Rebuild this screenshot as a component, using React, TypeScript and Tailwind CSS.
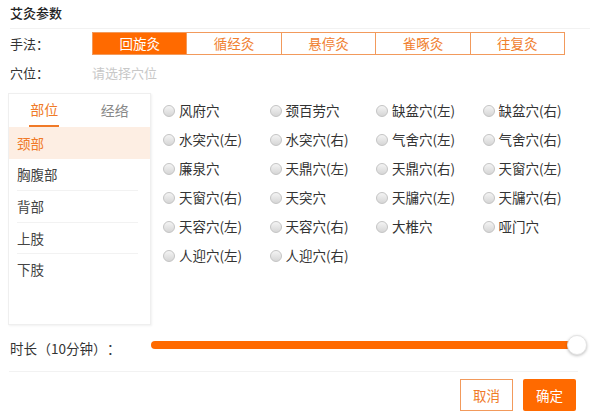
import React from "react";

const methods = ["回旋灸", "循经灸", "悬停灸", "雀啄灸", "往复灸"];
const parts = ["颈部", "胸腹部", "背部", "上肢", "下肢"];
const points = [
  "风府穴", "颈百劳穴", "缺盆穴(左)", "缺盆穴(右)",
  "水突穴(左)", "水突穴(右)", "气舍穴(左)", "气舍穴(右)",
  "廉泉穴", "天鼎穴(左)", "天鼎穴(右)", "天窗穴(左)",
  "天窗穴(右)", "天突穴", "天牖穴(左)", "天牖穴(右)",
  "天容穴(左)", "天容穴(右)", "大椎穴", "哑门穴",
  "人迎穴(左)", "人迎穴(右)",
];

export default function App() {
  return (
    <div
      className="w-[600px] h-[418px] bg-white text-[#333] overflow-hidden"
      style={{ fontFamily: '"Noto Sans CJK SC", "Noto Sans", sans-serif' }}
    >
      {/* title */}
      <div className="mx-[10px] h-[29px] flex items-center pb-[3px] border-b border-[#f2f2f2] text-[13px] font-medium text-[#222]">
        艾灸参数
      </div>

      {/* method */}
      <div className="flex items-center h-[23px] mt-[3px]">
        <div className="w-[92px] pl-[10px] text-[13px] text-[#333]">手法：</div>
        <div className="flex w-[473px] h-[23px] border border-[#f29a5c]">
          {methods.map((m, i) => (
            <div
              key={m}
              className={
                "flex-1 flex items-center justify-center text-[13.5px] " +
                (i === 0
                  ? "bg-[#ff6a00] text-white"
                  : "text-[#f0802f] border-l border-[#f29a5c]")
              }
            >
              {m}
            </div>
          ))}
        </div>
      </div>

      {/* point */}
      <div className="flex items-center h-[24px] mt-[6px]">
        <div className="w-[92px] pl-[10px] text-[13px] text-[#333]">穴位：</div>
        <div className="text-[13px] text-[#c8c8c8]">请选择穴位</div>
      </div>

      {/* body */}
      <div className="flex mt-[8px] h-[232px]">
        <div className="ml-[8px] w-[143px] h-full border border-[#efefef] shadow-[1px_1px_2px_rgba(0,0,0,0.06)] flex flex-col">
          <div className="flex h-[33px]">
            <div className="flex-1 flex justify-center">
              <div className="h-full flex items-center text-[14px] text-[#f07a28] border-b-2 border-[#f07a28] px-[1px]">
                部位
              </div>
            </div>
            <div className="flex-1 flex items-center justify-center text-[14px] text-[#888]">
              经络
            </div>
          </div>
          {parts.map((p, i) => (
            <div
              key={p}
              className={
                "h-[31.5px] flex items-center text-[13.5px] " +
                (i === 0 ? "bg-[#fdeee3] text-[#f07a28] pl-[8px]" : "pl-[8px] text-[#444]")
              }
            >
              <div
                className={
                  "w-full h-full flex items-center mr-[12px] " +
                  (i > 1 ? "border-t border-[#f2f2f2]" : "")
                }
              >
                {p}
              </div>
            </div>
          ))}
        </div>

        <div className="pl-[12px] pt-[3px] grid grid-cols-[106.5px_106.5px_106.5px_106.5px] auto-rows-[29px] content-start">
          {points.map((p) => (
            <div key={p} className="flex items-center gap-[4px]">
              <span className="w-[12px] h-[12px] rounded-full border border-[#c4c4c4] bg-gradient-to-b from-[#f4f4f4] to-[#d6d6d6]" />
              <span className="text-[13.5px] text-[#333] leading-none">{p}</span>
            </div>
          ))}
        </div>
      </div>

      {/* duration */}
      <div className="flex items-center h-[40px]">
        <div className="w-[142px] pl-[10px] text-[13.5px] text-[#333] pt-[6px] whitespace-nowrap flex items-center">
          <span>时长</span>
          <span className="inline-block w-[14px] text-right">（</span>
          <span>10分钟</span>
          <span className="inline-block w-[14px]">）</span>
          <span className="inline-block w-[10px]">：</span>
        </div>
        <div className="relative w-[426px] h-[8px] rounded-full bg-[#ff6a00] ml-[9px]">
          <div className="absolute right-[-10px] top-[-6px] w-[20px] h-[20px] rounded-full bg-white border border-[#e4e4e4] shadow-[0_1px_3px_rgba(0,0,0,0.25)]" />
        </div>
      </div>

      <div className="mx-[9px] mr-[22px] mt-[6px] border-t border-[#f2f2f2]" />

      {/* buttons */}
      <div className="flex justify-end gap-[10px] mr-[24px] mt-[7px]">
        <button className="w-[53px] h-[32px] border border-[#f29a5c] text-[#f07a28] text-[13.5px] bg-white">
          取消
        </button>
        <button className="w-[53px] h-[32px] bg-[#ff6a00] text-white text-[13.5px] rounded-[2px]">
          确定
        </button>
      </div>
    </div>
  );
}
